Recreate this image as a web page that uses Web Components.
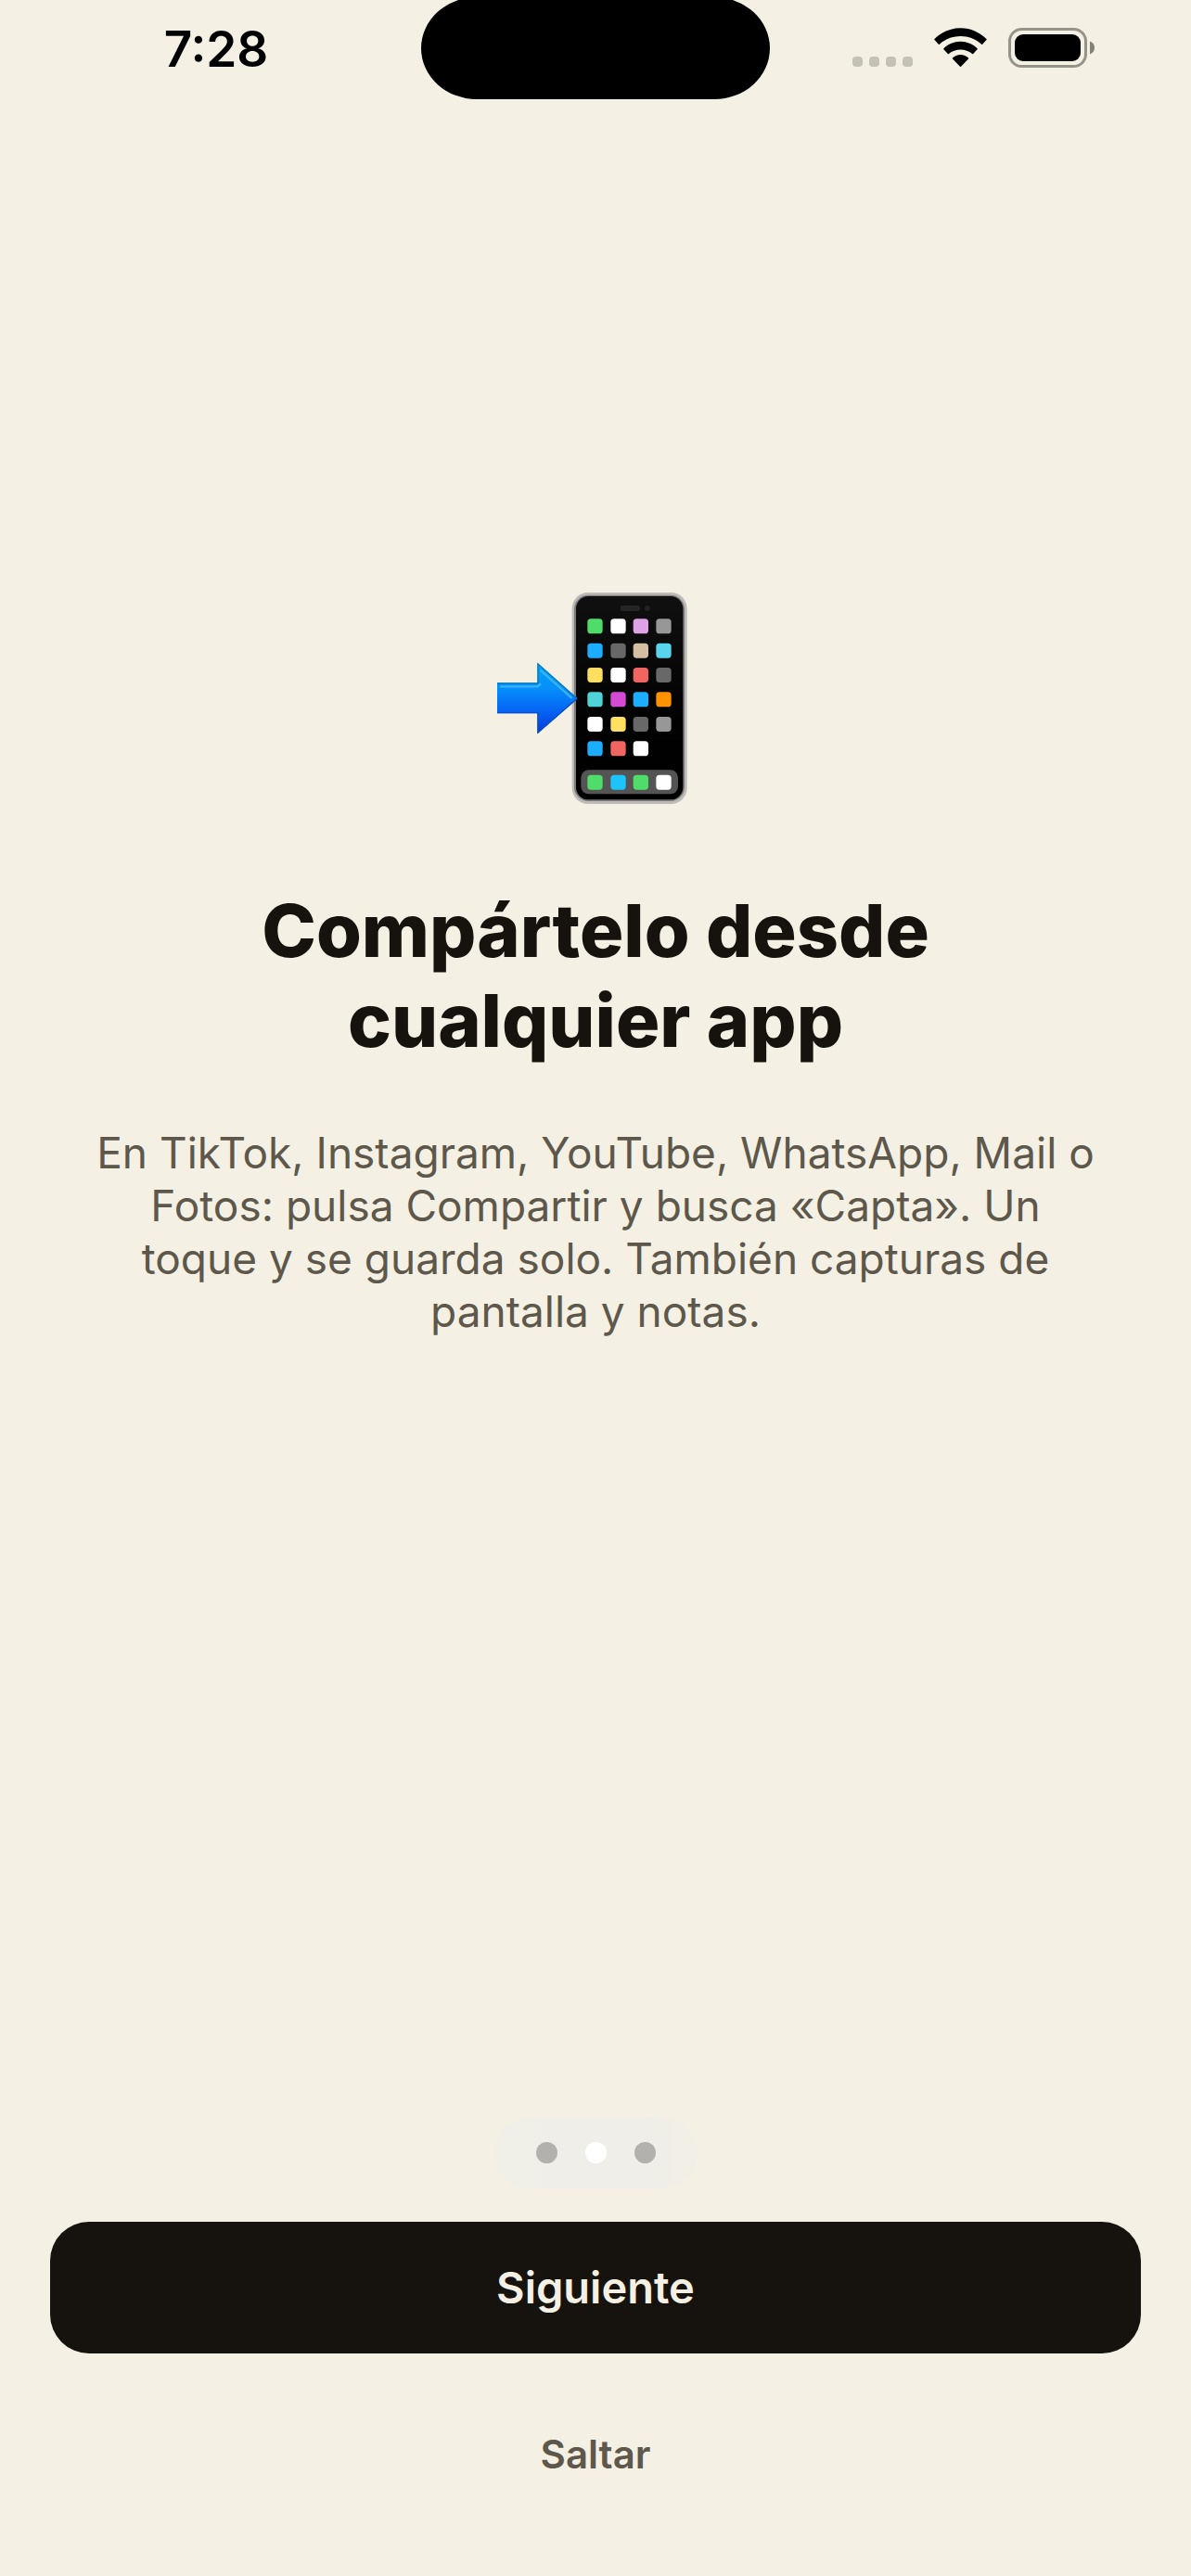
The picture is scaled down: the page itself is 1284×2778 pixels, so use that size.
<!DOCTYPE html>
<html lang="es">
<head>
<meta charset="utf-8">
<meta name="viewport" content="width=device-width, initial-scale=1">
<title>Capta</title>
<style>
  :root {
    --paper: #f4f0e4;
    --ink: #16130e;
    --muted: #5d584b;
  }

  body {
    margin: 0;
    background: var(--paper);
    color: var(--ink);
    font-family: Inter, "Liberation Sans", sans-serif;
  }
</style>
</head>
<body>
<capta-onboarding>
  <status-bar slot="status" time="7:28"></status-bar>
  <onboarding-page>
    <phone-emoji slot="art"></phone-emoji>
    <span slot="title">Compártelo desde cualquier app</span>
    En TikTok, Instagram, YouTube, WhatsApp, Mail o Fotos: pulsa Compartir y busca «Capta». Un toque y se guarda solo. También capturas de pantalla y notas.
  </onboarding-page>
  <page-dots slot="footer" count="3" current="1"></page-dots>
  <action-button slot="footer">Siguiente</action-button>
  <action-button slot="footer" variant="plain">Saltar</action-button>
</capta-onboarding>

<script>
const define = (name, html, setup) => {
  const template = document.createElement("template");
  template.innerHTML = html;

  customElements.define(name, class extends HTMLElement {
    constructor() {
      super();
      this.attachShadow({ mode: "open" });
      this.shadowRoot.appendChild(template.content.cloneNode(true));
    }

    connectedCallback() {
      if (setup) setup(this, this.shadowRoot);
    }
  });
};

define("capta-onboarding", /* HTML */ `
  <style>
    :host {
      display: flex;
      flex-direction: column;
      min-height: 100vh;
    }

    main {
      flex: 1;
      display: grid;
      align-items: center;
      padding: 0 96px 318px;
    }

    footer {
      display: flex;
      flex-direction: column;
      gap: 36px;
      padding: 0 54px 60px;
    }
  </style>
  <slot name="status"></slot>
  <main><slot></slot></main>
  <footer><slot name="footer"></slot></footer>
`);

define("status-bar", /* HTML */ `
  <style>
    :host {
      display: grid;
      grid-template-columns: 1fr 376px 1fr;
      height: 107px;
      color: #000;
    }

    .time {
      justify-self: center;
      margin: 21px 0 0 12px;
      font-size: 53px;
      font-weight: 600;
      line-height: 64px;
    }

    .island {
      margin-top: -3px;
      border-radius: 60px / 55px;
      background: #000;
    }

    .icons {
      display: flex;
      align-items: flex-start;
      justify-content: flex-end;
      gap: 22px;
      padding: 30px 103px 0 0;
    }

    svg {
      display: block;
      flex: none;
    }
  </style>
  <div class="time"></div>
  <div class="island"></div>
  <div class="icons">
    <svg width="66" height="43" viewBox="0 0 66 43" fill="#c4c1b5" aria-hidden="true">
      <rect x="0" y="31" width="11" height="11" rx="4"/>
      <rect x="18" y="31" width="11" height="11" rx="4"/>
      <rect x="36" y="31" width="11" height="11" rx="4"/>
      <rect x="54" y="31" width="11" height="11" rx="4"/>
    </svg>
    <svg width="57" height="43" viewBox="0 0 57 43" aria-hidden="true">
      <path d="M28.500 0.300C39.500 0.300 49.300 4.900 56.500 12Q57 12.500 56.500 13L52.200 17.700Q51.700 18.200 51.100 17.700C45.100 12.100 37.200 8.900 28.500 8.900S11.900 12.100 5.900 17.700Q5.300 18.200 4.800 17.700L.5 13Q0 12.500.5 12C7.700 4.900 17.500.3 28.500.3Z"/>
      <path d="M28.500 14.800C35.500 14.800 41.800 17.700 46.600 22.200Q47.100 22.700 46.600 23.200L42.200 28Q41.700 28.500 41.100 28C37.600 25.100 33.200 23.500 28.500 23.500S19.400 25.100 15.900 28Q15.300 28.500 14.800 28L10.400 23.200Q9.900 22.700 10.400 22.200C15.200 17.700 21.500 14.800 28.500 14.800Z"/>
      <path d="M28.500 29C31.800 29 34.700 30.300 37 32.400Q37.500 32.900 37 33.400L29 41.800Q28.500 42.300 28 41.800L20 33.400Q19.500 32.900 20 32.400C22.300 30.300 25.200 29 28.500 29Z"/>
    </svg>
    <svg width="95" height="43" viewBox="0 0 95 43" aria-hidden="true">
      <rect x="2.500" y="1.500" width="82" height="40" rx="13" fill="none" stroke="#96938a" stroke-width="3"/>
      <rect x="8" y="7" width="71" height="29" rx="9"/>
      <path d="M89 14.500C92.500 15.800 94 18.500 94 21.500S92.500 27.200 89 28.500Z" fill="#848178"/>
    </svg>
  </div>
`, (host, root) => {
  root.querySelector(".time").textContent = host.getAttribute("time");
});

define("onboarding-page", /* HTML */ `
  <style>
    :host {
      display: flex;
      flex-direction: column;
      align-items: center;
      text-align: center;
    }

    h1 {
      max-width: 900px;
      margin: 75px 0 66px;
      font-size: 79px;
      font-weight: 800;
      line-height: 97px;
    }

    p {
      margin: 0;
      color: var(--muted);
      font-size: 46px;
      line-height: 57px;
    }
  </style>
  <slot name="art"></slot>
  <h1><slot name="title"></slot></h1>
  <p><slot></slot></p>
`);

define("phone-emoji", /* HTML */ `
  <style>
    :host {
      display: block;
    }

    svg {
      display: block;
    }
  </style>
  <svg width="236" height="250" viewBox="12 0 708 750" role="img" aria-label="Flecha hacia un móvil">
    <defs>
      <linearGradient id="screen" x1="0" x2="0" y1="0" y2="1">
        <stop offset="0" stop-color="#101010"/>
        <stop offset=".6" stop-color="#020202"/>
        <stop offset="1" stop-color="#000"/>
      </linearGradient>
      <linearGradient id="arrow" x1="0" x2="0" y1="0" y2="1">
        <stop offset="0" stop-color="#00a5f5"/>
        <stop offset=".35" stop-color="#0590fa"/>
        <stop offset=".65" stop-color="#0668f5"/>
        <stop offset="1" stop-color="#0636d8"/>
      </linearGradient>
    </defs>
    <rect x="290" y="27" width="372" height="684" rx="52" fill="#bdbab7"/>
    <rect x="297" y="35" width="357" height="667" rx="46" fill="#7d7b7d"/>
    <rect x="303" y="39" width="346" height="658" rx="40" fill="url(#screen)"/>
    <rect x="446" y="69" width="64" height="18" rx="8" fill="#252525"/>
    <circle cx="533" cy="78" r="9" fill="#222"/>
    <rect x="319" y="601" width="314" height="78" rx="25" fill="#545454"/>
    <g class="apps"></g>
    <path d="M48 319H178V255L308 370 178 484V418H48Z" fill="url(#arrow)"/>
    <path d="M48 321H180V258L305 369" fill="none" stroke="#087bbb" stroke-width="4"/>
    <path d="M60 331H178L187 324M190 280L288 367" fill="none" stroke="#3ab2fc" stroke-width="7" stroke-linecap="round"/>
    <path d="M48 416H180V480L304 372" fill="none" stroke="#0750c5" stroke-width="4"/>
  </svg>
`, (host, root) => {
  // home screen icons, row by row; the last row sits in the dock
  const rows = [
    [112, "#4fdc69", "#fff", "#dda3e5", "#979797"],
    [191, "#1dadff", "#686868", "#d5bea1", "#58d4ed"],
    [270, "#ffdf61", "#fff", "#f0655f", "#686868"],
    [349, "#4dd3d8", "#d34bd3", "#1dadff", "#ff9200"],
    [429, "#fff", "#ffdf61", "#686868", "#979797"],
    [508, "#1dadff", "#f0655f", "#fff"],
    [617, "#4fdc69", "#1cc4fa", "#4fdc69", "#fff"],
  ];
  const columns = [340, 415, 488, 562];

  root.querySelector(".apps").innerHTML = rows
    .map(([y, ...fills]) => fills
      .map((fill, i) => `<rect x="${columns[i]}" y="${y}" width="49" height="48" rx="11" fill="${fill}"/>`)
      .join(""))
    .join("");
});

define("page-dots", /* HTML */ `
  <style>
    :host {
      display: flex;
      align-self: center;
      gap: 30px;
      padding: 27px 45px;
      border-radius: 39px;
      background: linear-gradient(to right, #f1f0e8, #efeee8 30% 75%, #f2efe6);
    }

    i {
      width: 23px;
      height: 23px;
      border-radius: 50%;
      background: #b2b1ad;
    }

    i.current {
      background: #fff;
    }
  </style>
`, (host, root) => {
  const current = Number(host.getAttribute("current"));
  for (let i = 0; i < Number(host.getAttribute("count")); i++) {
    const dot = document.createElement("i");
    dot.classList.toggle("current", i === current);
    root.appendChild(dot);
  }
});

define("action-button", /* HTML */ `
  <style>
    :host {
      display: block;
    }

    button {
      display: block;
      width: 100%;
      padding: 42px;
      border: 0;
      border-radius: 42px;
      background: var(--ink);
      color: var(--paper);
      font: inherit;
      font-size: 47px;
      font-weight: 600;
      line-height: 58px;
      cursor: pointer;
    }

    :host([variant="plain"]) button {
      background: none;
      color: var(--muted);
      font-size: 42px;
      padding: 44px 42px 42px;
    }
  </style>
  <button type="button"><slot></slot></button>
`);
</script>
</body>
</html>
